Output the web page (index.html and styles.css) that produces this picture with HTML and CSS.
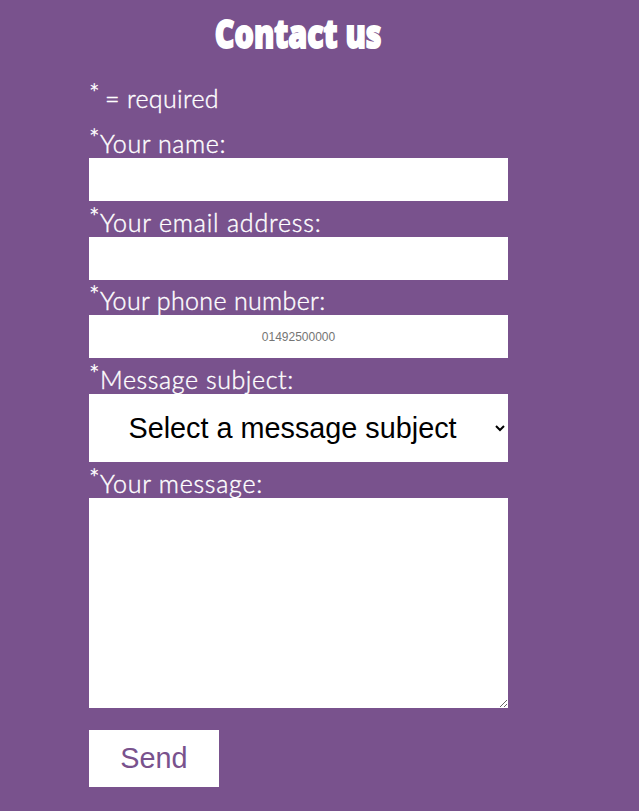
FILE: index.html
```html
<!DOCTYPE html>
<html lang="en">
<head>
<meta charset="utf-8">
<title>Contact us</title>
<link rel="stylesheet" href="styles.css">
</head>
<body>
<form class="contact">
  <h1 class="title"><span class="title-text">Contact us</span></h1>
  <p class="note"><sup class="star">*</sup><span class="note-text">= required</span></p>
  <label class="label" for="name"><sup class="star">*</sup><span>Your name:</span></label>
  <input class="field" id="name" type="text">
  <label class="label label-email" for="email"><sup class="star">*</sup><span>Your email address:</span></label>
  <input class="field" id="email" type="email">
  <label class="label label-phone" for="phone"><sup class="star">*</sup><span>Your phone number:</span></label>
  <input class="field" id="phone" type="tel" placeholder="01492500000">
  <label class="label" for="subject"><sup class="star">*</sup><span>Message subject:</span></label>
  <select class="field subject" id="subject"><option>Select a message subject</option></select>
  <label class="label label-message" for="message"><sup class="star">*</sup><span>Your message:</span></label>
  <textarea class="field message" id="message"></textarea>
  <button class="send" type="button">Send</button>
</form>
</body>
</html>
```
FILE: styles.css
```css
* { box-sizing: border-box; }
body {
  margin: 0;
  height: 811px;
  overflow: hidden;
  background: #79528d;
  color: #fff;
  font-family: Lato, sans-serif;
  font-weight: 300;
}
.contact {
  display: flex;
  flex-direction: column;
  width: 419px;
  margin-left: 89px;
}
.title {
  margin: 10px 0 0;
  height: 71px;
  line-height: 47px;
  font-family: "Open Sans", sans-serif;
  font-size: 38px;
  font-weight: 800;
  text-align: center;
  white-space: nowrap;
  -webkit-text-stroke: 1.8px #fff;
}
.title-text { display: inline-block; transform: scaleX(.8); }
.note, .label {
  display: flex;
  flex: none;
  margin: 0;
  line-height: 35px;
  font-size: 25px;
  white-space: nowrap;
  -webkit-text-stroke: .4px #fff;
}
.note { height: 41.3px; }
.note-text { margin-left: -1px; letter-spacing: .35px; }
.label { height: 35.7px; padding-top: 3.6px; letter-spacing: .6px; }
.label-email { letter-spacing: .8px; }
.label-phone { letter-spacing: .35px; }
.label-message { letter-spacing: .75px; }
.star {
  width: 11px;
  font-size: 25px;
  line-height: 25px;
  letter-spacing: 0;
  vertical-align: top;
}
.note .star { width: 17px; }
.field {
  display: block;
  flex: none;
  width: 419px;
  height: 43px;
  margin: 0;
  padding: 0;
  border: 0;
  border-radius: 0;
  background: #fff;
  font-family: "Liberation Sans", Arial, sans-serif;
  font-size: 12px;
  text-align: center;
}
.subject { height: 68px; padding-bottom: 1px; color: #000; font-size: 28.8px; }
.message { height: 210px; resize: vertical; }
.send {
  width: 130px;
  height: 57px;
  margin-top: 22px;
  padding: 0;
  border: 0;
  background: #fff;
  color: #79528d;
  font-family: "Liberation Sans", Arial, sans-serif;
  font-size: 28.8px;
}
```
